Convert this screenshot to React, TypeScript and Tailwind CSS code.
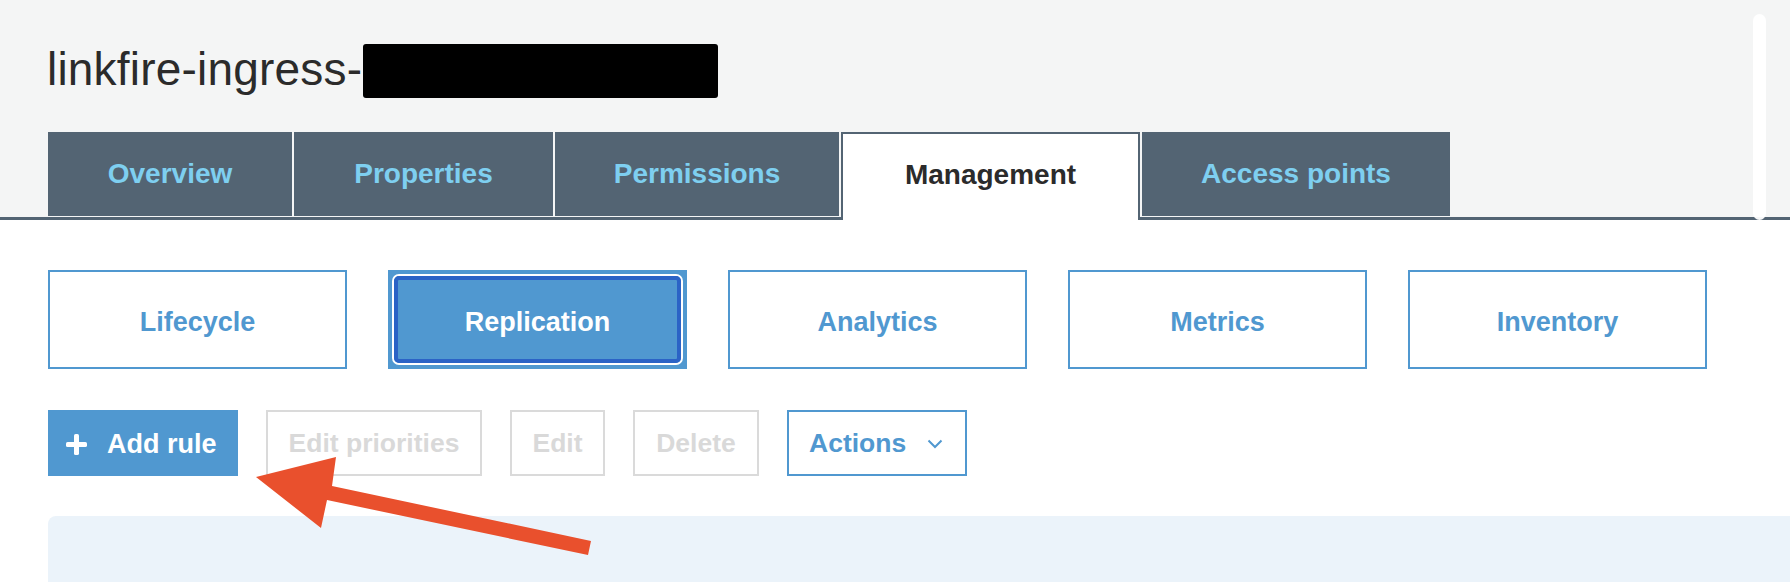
import React from "react";

const tabs = [
  { label: "Overview", w: "w-[244px]" },
  { label: "Properties", w: "w-[259px]" },
  { label: "Permissions", w: "w-[284px]" },
  { label: "Management", w: "w-[299px]", active: true },
  { label: "Access points", w: "w-[308px]" },
];

const subs = ["Lifecycle", "Replication", "Analytics", "Metrics", "Inventory"];

export default function App() {
  return (
    <div className="relative w-full h-[582px] overflow-hidden bg-white font-['Liberation_Sans',Arial,sans-serif]">
      <header className="relative bg-[#f4f5f5] border-b-[3px] border-[#536473]">
        <div className="h-[132px] pl-[47px] flex items-start">
          <h1 className="mt-[46px] text-[46px] leading-none font-normal text-[#2b2b2b] tracking-[0.2px]">
            linkfire-ingress-
          </h1>
          <span className="mt-[44px] ml-[1px] h-[54px] w-[355px] bg-black rounded-[3px]" />
        </div>
        <nav className="flex items-start gap-[2px] pl-[48px] pb-[1px]">
          {tabs.map((t) =>
            t.active ? (
              <div
                key={t.label}
                className={`${t.w} relative z-10 h-[88px] mb-[-4px] pb-[4px] flex items-center justify-center bg-white border-2 border-b-0 border-[#536473] text-[28px] font-bold text-[#2b2b2b]`}
              >
                {t.label}
              </div>
            ) : (
              <div
                key={t.label}
                className={`${t.w} h-[84px] flex items-center justify-center bg-[#536473] text-[28px] font-bold text-[#7ecff0]`}
              >
                {t.label}
              </div>
            )
          )}
        </nav>
      </header>

      <div className="mt-[50px] pl-[48px] flex gap-[41px]">
        {subs.map((s) =>
          s === "Replication" ? (
            <div key={s} className="w-[299px] h-[99px] p-[4px] bg-[#5098d0]">
              <div className="w-full h-full rounded-[7px] border-2 border-white">
                <div className="w-full h-full pt-[5px] rounded-[5px] border-[4px] border-[#2b63c6] bg-[#5098d0] flex items-center justify-center text-[27px] font-bold text-white">
                  {s}
                </div>
              </div>
            </div>
          ) : (
            <div
              key={s}
              className="w-[299px] h-[99px] pt-[5px] border-2 border-[#5098d0] bg-white flex items-center justify-center text-[27px] font-bold text-[#5098d0]"
            >
              {s}
            </div>
          )
        )}
      </div>

      <div className="mt-[41px] pl-[48px] flex gap-[28px] h-[66px]">
        <div className="w-[190px] h-full pt-[2px] bg-[#5098d0] flex items-center pl-[18px] gap-[20px] text-white text-[27px] font-bold">
          <svg className="shrink-0 block" width="21" height="21" viewBox="0 0 21 21">
            <rect x="8" y="0" width="5" height="21" rx="1.6" fill="white" />
            <rect x="0" y="8" width="21" height="5" rx="1.6" fill="white" />
          </svg>
          <span>Add rule</span>
        </div>
        <div className="w-[216px] h-full pt-[2px] border-2 border-[#dadada] flex items-center justify-center text-[26.5px] font-bold text-[#d9d9d9]">
          Edit priorities
        </div>
        <div className="w-[95px] h-full pt-[2px] border-2 border-[#dadada] flex items-center justify-center text-[26.5px] font-bold text-[#d9d9d9]">
          Edit
        </div>
        <div className="w-[126px] h-full pt-[2px] border-2 border-[#dadada] flex items-center justify-center text-[26.5px] font-bold text-[#d9d9d9]">
          Delete
        </div>
        <div className="w-[180px] h-full pt-[2px] border-2 border-[#5098d0] flex items-center pl-[20px] gap-[21px] text-[26.5px] font-bold text-[#5098d0]">
          <span>Actions</span>
          <svg className="shrink-0" width="16" height="10" viewBox="0 0 16 10">
            <polyline points="1.5,1.5 8,8 14.5,1.5" fill="none" stroke="#5098d0" strokeWidth="2" />
          </svg>
        </div>
      </div>

      <div className="mt-[40px] ml-[48px] h-[80px] bg-[#ebf3fa] rounded-tl-[8px]" />

      <span className="absolute left-[1753px] top-[14px] w-[13px] h-[206px] bg-white rounded-full opacity-95" />

      <svg className="absolute left-0 top-0 pointer-events-none" width="1790" height="582" viewBox="0 0 1790 582">
        <polygon
          points="256,477 336,457 332,486 591,541 588,555 327,500 321,528"
          fill="#e9502d"
        />
      </svg>
    </div>
  );
}
